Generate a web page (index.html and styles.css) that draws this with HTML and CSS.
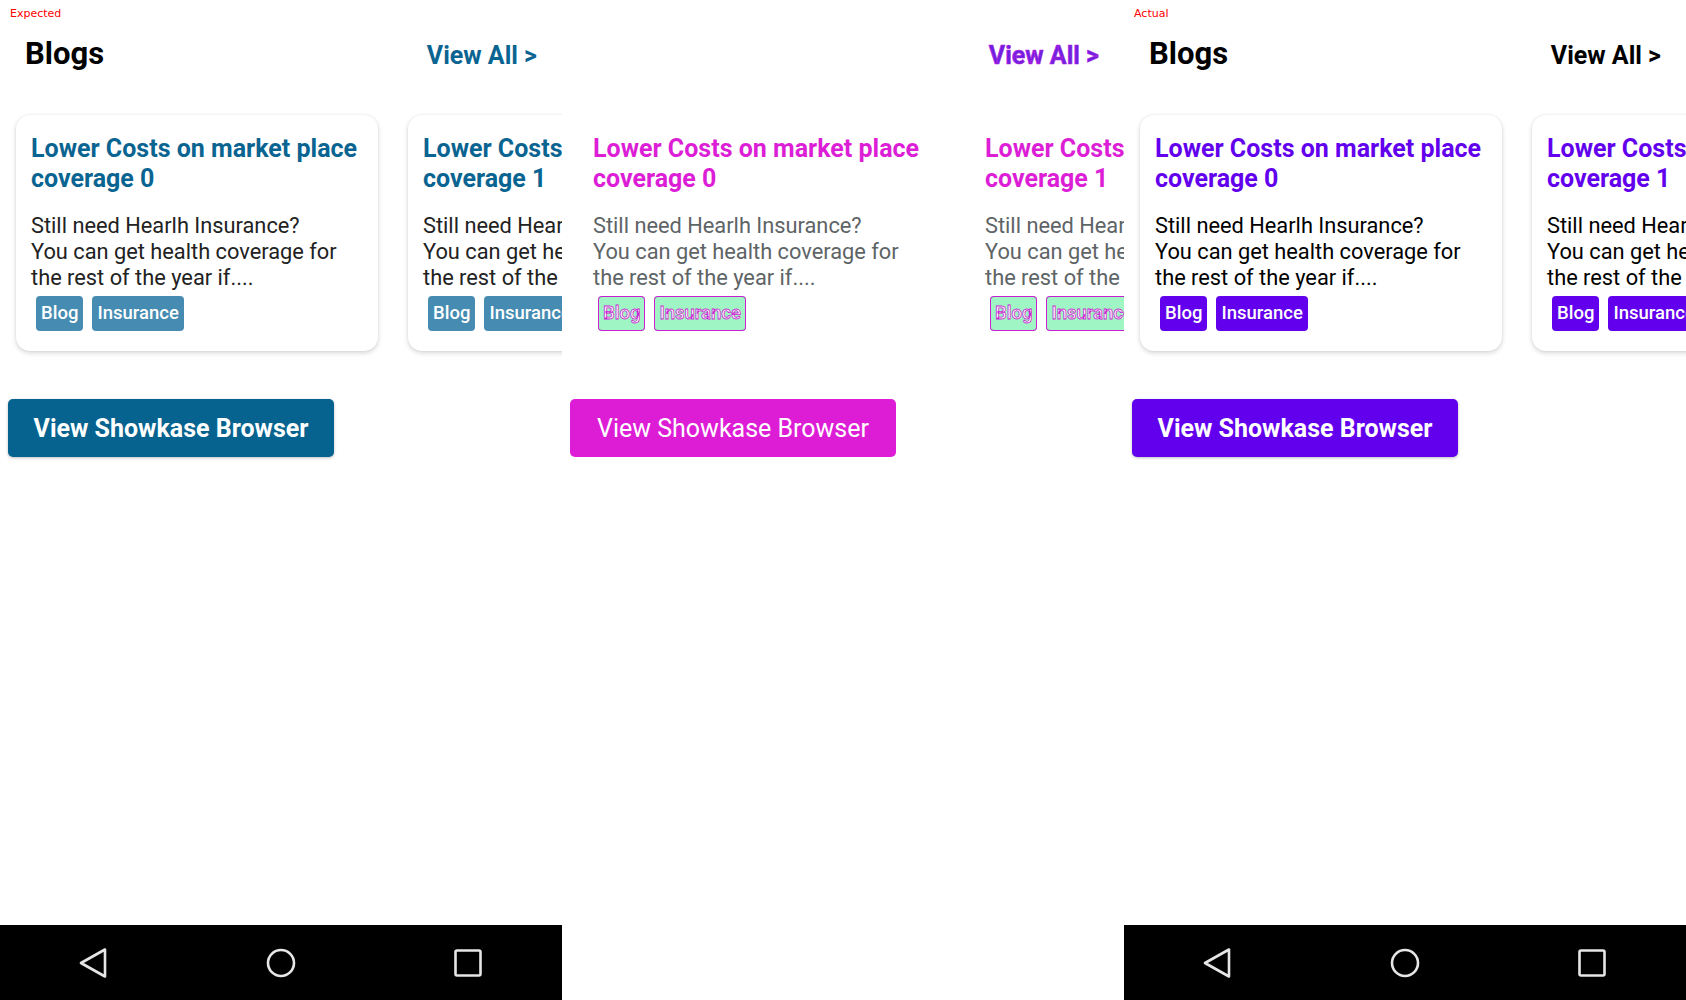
FILE: index.html
```html
<!DOCTYPE html>
<html lang="en">
<head>
<meta charset="utf-8">
<title>Blogs screenshot comparison</title>
<link rel="stylesheet" href="styles.css">
</head>
<body>
<div class="compare">

  <section class="panel panel--expected">
    <span class="label">Expected</span>
    <header class="head">
      <h1 class="head__title">Blogs</h1>
      <a class="head__link">View All &gt;</a>
    </header>
    <div class="cards">
      <article class="card">
        <h2 class="card__title">Lower Costs on market place coverage 0</h2>
        <p class="card__text">Still need Hearlh Insurance?<br>You can get health coverage for the rest of the year if....</p>
        <div class="tags"><span class="tag">Blog</span><span class="tag">Insurance</span></div>
      </article>
      <article class="card">
        <h2 class="card__title">Lower Costs on market place coverage 1</h2>
        <p class="card__text">Still need Hearlh Insurance?<br>You can get health coverage for the rest of the year if....</p>
        <div class="tags"><span class="tag">Blog</span><span class="tag">Insurance</span></div>
      </article>
    </div>
    <div class="action"><button class="showkase">View Showkase Browser</button></div>
    <nav class="navbar">
      <svg class="navbar__icon" viewBox="0 0 30 30"><path d="M26 1.5 L26 28.5 L2 15 Z"/></svg>
      <svg class="navbar__icon" viewBox="0 0 30 30"><circle cx="15" cy="15" r="13"/></svg>
      <svg class="navbar__icon" viewBox="0 0 30 30"><rect x="2.5" y="2.5" width="25" height="25" rx="1.5"/></svg>
    </nav>
  </section>

  <section class="panel panel--diff">
    <header class="head">
      <h1 class="head__title">Blogs</h1>
      <a class="head__link">View All &gt;</a>
    </header>
    <div class="cards">
      <article class="card">
        <h2 class="card__title">Lower Costs on market place coverage 0</h2>
        <p class="card__text">Still need Hearlh Insurance?<br>You can get health coverage for the rest of the year if....</p>
        <div class="tags"><span class="tag">Blog</span><span class="tag">Insurance</span></div>
      </article>
      <article class="card">
        <h2 class="card__title">Lower Costs on market place coverage 1</h2>
        <p class="card__text">Still need Hearlh Insurance?<br>You can get health coverage for the rest of the year if....</p>
        <div class="tags"><span class="tag">Blog</span><span class="tag">Insurance</span></div>
      </article>
    </div>
    <div class="action"><button class="showkase">View Showkase Browser</button></div>
    <nav class="navbar"></nav>
  </section>

  <section class="panel panel--actual">
    <span class="label">Actual</span>
    <header class="head">
      <h1 class="head__title">Blogs</h1>
      <a class="head__link">View All &gt;</a>
    </header>
    <div class="cards">
      <article class="card">
        <h2 class="card__title">Lower Costs on market place coverage 0</h2>
        <p class="card__text">Still need Hearlh Insurance?<br>You can get health coverage for the rest of the year if....</p>
        <div class="tags"><span class="tag">Blog</span><span class="tag">Insurance</span></div>
      </article>
      <article class="card">
        <h2 class="card__title">Lower Costs on market place coverage 1</h2>
        <p class="card__text">Still need Hearlh Insurance?<br>You can get health coverage for the rest of the year if....</p>
        <div class="tags"><span class="tag">Blog</span><span class="tag">Insurance</span></div>
      </article>
    </div>
    <div class="action"><button class="showkase">View Showkase Browser</button></div>
    <nav class="navbar">
      <svg class="navbar__icon" viewBox="0 0 30 30"><path d="M26 1.5 L26 28.5 L2 15 Z"/></svg>
      <svg class="navbar__icon" viewBox="0 0 30 30"><circle cx="15" cy="15" r="13"/></svg>
      <svg class="navbar__icon" viewBox="0 0 30 30"><rect x="2.5" y="2.5" width="25" height="25" rx="1.5"/></svg>
    </nav>
  </section>

</div>
</body>
</html>
```
FILE: styles.css
```css
* { box-sizing: border-box; }

html, body {
  margin: 0;
  padding: 0;
  background: #ffffff;
}

body {
  font-family: Roboto, "Noto Sans", sans-serif;
  width: 1686px;
  height: 1000px;
  overflow: hidden;
}

.compare {
  display: flex;
  width: 1686px;
  height: 1000px;
}

.panel {
  position: relative;
  width: 562px;
  flex: 0 0 562px;
  height: 1000px;
  display: flex;
  flex-direction: column;
  overflow: hidden;
  background: #ffffff;
}

.label {
  position: absolute;
  left: 10px;
  top: 6px;
  font-family: "DejaVu Sans", sans-serif;
  font-size: 11px;
  line-height: 16px;
  color: #ff0000;
}

/* header */
.head {
  display: flex;
  justify-content: space-between;
  align-items: baseline;
  padding: 37px 25px 0 25px;
}

.head__title {
  margin: 0;
  font-size: 31px;
  line-height: 34px;
  font-weight: 700;
  color: #000000;
}

.head__link {
  font-size: 25px;
  line-height: 34px;
  font-weight: 700;
  color: #0a6491;
  text-decoration: none;
}

/* cards */
.cards {
  display: flex;
  gap: 30px;
  padding: 0 16px 0 16px;
  margin-top: 42px;
}

.card {
  flex: 0 0 362px;
  width: 362px;
  padding: 19px 14px 20px 15px;
  background: #ffffff;
  border-radius: 14px;
  box-shadow: 0 2px 5px rgba(0, 0, 0, 0.16), 0 0 2px rgba(0, 0, 0, 0.08);
}

.card__title {
  margin: 0;
  font-size: 25px;
  line-height: 30px;
  font-weight: 700;
  color: #0a6491;
}

.card__text {
  margin: 19px 0 0 0;
  font-size: 21.8px;
  line-height: 26px;
  font-weight: 400;
  color: #222222;
}

.tags {
  display: flex;
  gap: 9px;
  margin: 5px 0 0 5px;
}

.tag {
  display: block;
  height: 35px;
  padding: 0 5px;
  font-size: 18.5px;
  line-height: 35px;
  font-weight: 500;
  color: #ffffff;
  background: #468bb1;
  border-radius: 4px;
  white-space: nowrap;
}

/* action button */
.action {
  padding: 48px 0 0 8px;
}

.showkase {
  width: 326px;
  height: 58px;
  border: 0;
  border-radius: 5px;
  background: #06638f;
  color: #ffffff;
  font-family: Roboto, sans-serif;
  font-size: 25px;
  font-weight: 700;
  box-shadow: 0 1px 3px rgba(0, 0, 0, 0.25);
  padding: 0;
}

/* navigation bar */
.navbar {
  margin-top: auto;
  height: 75px;
  background: #000000;
  display: flex;
  justify-content: space-around;
  align-items: center;
}

.navbar__icon {
  width: 30px;
  height: 30px;
  fill: none;
  stroke: #e6e6e6;
  stroke-width: 2.6;
  stroke-linejoin: round;
}

/* actual */
.panel--actual .head__link { color: #000000; }
.panel--actual .card__title { color: #6200ee; }
.panel--actual .card__text { color: #000000; }
.panel--actual .tag { background: #6200ee; }
.panel--actual .showkase { background: #6200ee; }

/* diff */
.panel--diff .head__title { visibility: hidden; }
.panel--diff .head__link { color: #7020e2; -webkit-text-stroke: 0.6px #b01fdc; }
.panel--diff .card { box-shadow: none; }
.panel--diff .card__title { color: #dc1fd6; }
.panel--diff .card__text { color: #5e6466; }
.panel--diff .tag {
  background: #a0f5c4;
  color: #ffffff;
  -webkit-text-stroke: 0.8px #c81fd2;
  box-shadow: inset 0 0 0 1px #c81fd2;
  font-weight: 500;
}
.panel--diff .showkase {
  background: #dd1dd6;
  font-weight: 400;
  box-shadow: none;
}
.panel--diff .navbar { background: #ffffff; }
```
